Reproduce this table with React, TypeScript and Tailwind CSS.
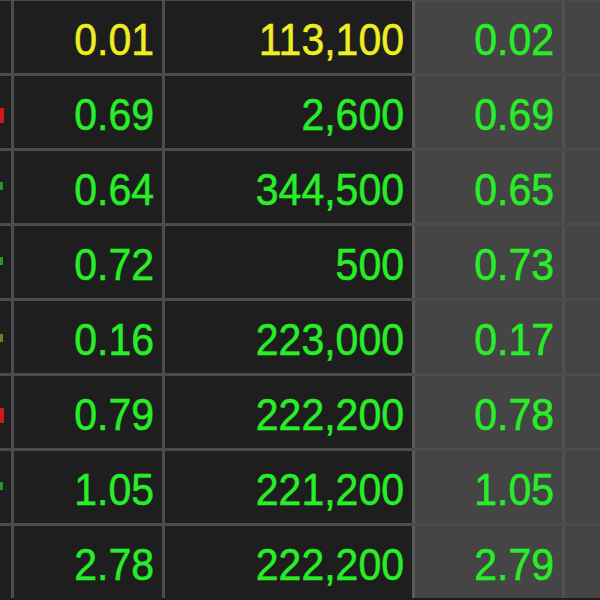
import React from 'react';

type Row = {
  mark: 'none' | 'red' | 'green' | 'olive';
  change: string;
  volume: string;
  price: string;
  tone: 'yellow' | 'green';
};

const rows: Row[] = [
  { mark: 'none', change: '0.01', volume: '113,100', price: '0.02', tone: 'yellow' },
  { mark: 'red', change: '0.69', volume: '2,600', price: '0.69', tone: 'green' },
  { mark: 'green', change: '0.64', volume: '344,500', price: '0.65', tone: 'green' },
  { mark: 'green', change: '0.72', volume: '500', price: '0.73', tone: 'green' },
  { mark: 'olive', change: '0.16', volume: '223,000', price: '0.17', tone: 'green' },
  { mark: 'red', change: '0.79', volume: '222,200', price: '0.78', tone: 'green' },
  { mark: 'green', change: '1.05', volume: '221,200', price: '1.05', tone: 'green' },
  { mark: 'none', change: '2.78', volume: '222,200', price: '2.79', tone: 'green' },
];

const Num = ({ value, color }: { value: string; color: string }) => (
  <span className={`inline-block scale-y-[1.1] pt-[4px] [-webkit-text-stroke:0.5px] ${color}`}>{value}</span>
);

const Marker = ({ mark }: { mark: Row['mark'] }) => {
  if (mark === 'red') return <div className="w-[4px] h-[15px] bg-[#d01818] mt-[6px]" />;
  if (mark === 'green') return <div className="w-[3px] h-[8px] bg-[#1f9a2a] mb-[2px]" />;
  if (mark === 'olive') return <div className="w-[3px] h-[8px] bg-[#7a7a1c] mt-[2px]" />;
  return null;
};

export default function App() {
  return (
    <div
      className="w-[600px] h-[600px] overflow-hidden bg-[#1e1e1e] text-[41px] leading-none"
      style={{ fontFamily: '"Liberation Sans", Arial, sans-serif' }}
    >
      <div className="-mt-[2px]">
        {rows.map((r, i) => {
          const upper = r.tone === 'yellow' ? 'text-[#eeee22]' : 'text-[#28ee28]';
          return (
            <div key={i} className="flex h-[75px] border-t-[3px] border-[#4c4c4c]">
              <div className="w-[11px] flex items-center">
                <Marker mark={r.mark} />
              </div>
              <div className="w-[151px] border-l-[3px] border-[#4c4c4c] flex items-center justify-end pr-[8px]">
                <Num value={r.change} color={upper} />
              </div>
              <div className="w-[250px] border-l-[3px] border-[#4c4c4c] flex items-center justify-end pr-[8px]">
                <Num value={r.volume} color={upper} />
              </div>
              <div className="w-[150px] border-l-[3px] border-[#5a5a5a] bg-[#454545] flex items-center justify-end pr-[8px]">
                <Num value={r.price} color="text-[#28ee28]" />
              </div>
              <div className="flex-1 border-l-[3px] border-[#505050] bg-[#454545]" />
            </div>
          );
        })}
      </div>
    </div>
  );
}
